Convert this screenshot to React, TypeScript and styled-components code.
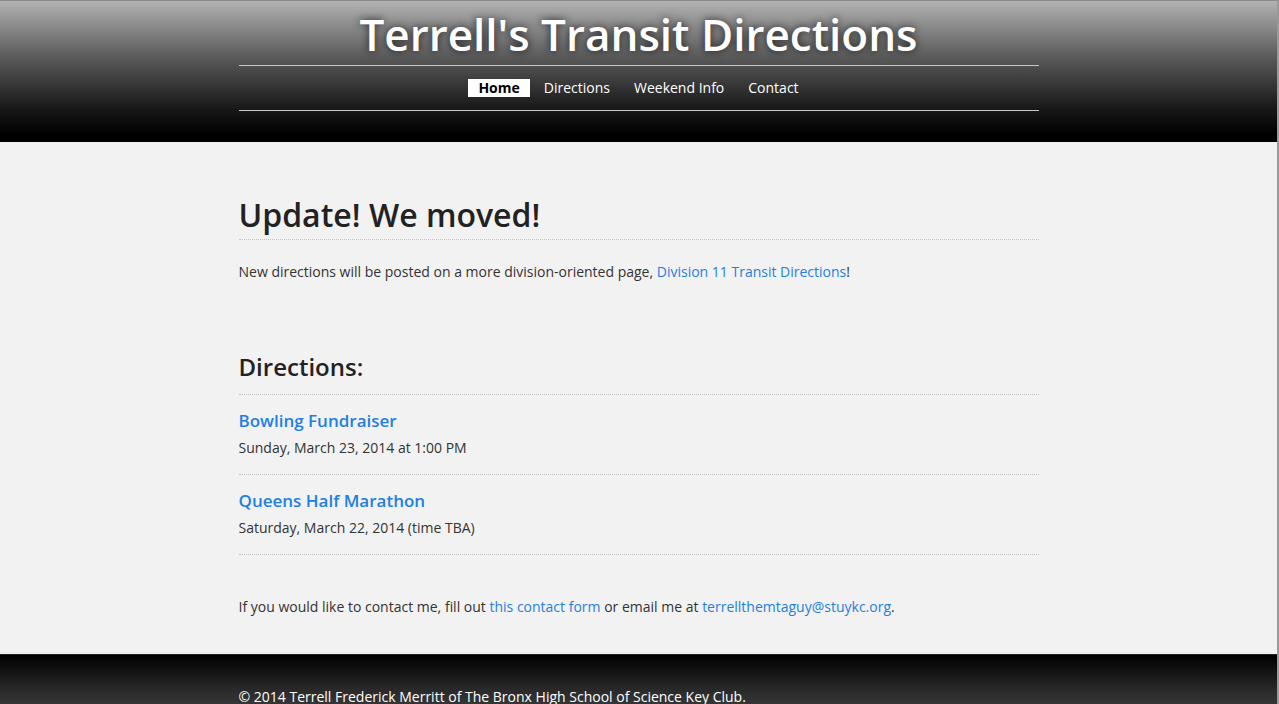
import styled, { createGlobalStyle } from "styled-components";

const GlobalStyle = createGlobalStyle`
  html, body {
    margin: 0;
    padding: 0;
    background: #f2f2f2;
    font-family: "Open Sans", "Liberation Sans", sans-serif;
    color: #333;
  }
`;

const Page = styled.div`
  min-height: 704px;
  background: #f2f2f2;
  border-right: 2px solid #9a9a9a;
`;

const Header = styled.header`
  height: 142px;
  background: linear-gradient(#b2b2b2 0%, #5a5a5a 40%, #1a1a1a 75%, #000 95%);
  border-top: 1px solid #8a8a8a;
  box-sizing: border-box;
`;

const Inner = styled.div`
  width: 800px;
  margin: 0 auto;
`;

const Title = styled.h1`
  margin: 0;
  height: 64px;
  line-height: 66px;
  text-align: center;
  color: #fff;
  font-size: 44px;
  font-weight: 600;
  text-shadow: 0 0 8px rgba(0, 0, 0, 0.8);
`;

const Nav = styled.nav`
  display: flex;
  justify-content: center;
  gap: 4px;
  padding: 13px 0;
  border-top: 1px solid #c8c8c8;
  border-bottom: 1px solid #c8c8c8;
`;

const NavItem = styled.a<{ $active?: boolean }>`
  display: block;
  height: 18px;
  line-height: 18px;
  padding: 0 10px;
  font-size: 14px;
  text-decoration: none;
  color: ${(p) => (p.$active ? "#000" : "#fff")};
  background: ${(p) => (p.$active ? "#fff" : "transparent")};
  font-weight: ${(p) => (p.$active ? 700 : 400)};
`;

const Main = styled.main`
  width: 800px;
  margin: 0 auto;
  padding: 53px 0 37px;
`;

const Heading = styled.h2<{ $size: number; $pad: number }>`
  margin: 0;
  font-size: ${(p) => p.$size}px;
  line-height: ${(p) => Math.round(p.$size * 1.25)}px;
  font-weight: 600;
  color: #222;
  padding-bottom: ${(p) => p.$pad}px;
  border-bottom: 1px dotted #c4c4c4;
`;

const Text = styled.p<{ $top: number }>`
  margin: ${(p) => p.$top}px 0 0;
  font-size: 14px;
  line-height: 20px;
  color: #333;
`;

const Link = styled.a`
  color: #1e80e0;
  text-decoration: none;
`;

const Section = styled.section`
  margin-top: 70px;
`;

const Item = styled.div`
  padding: 14px 0 16px;
  border-bottom: 1px dotted #c4c4c4;
`;

const ItemTitle = styled.a`
  display: block;
  font-size: 17px;
  line-height: 24px;
  font-weight: 600;
  color: #1e80e0;
  text-decoration: none;
`;

const ItemDate = styled.div`
  margin-top: 5px;
  font-size: 14px;
  line-height: 20px;
  color: #333;
`;

const Footer = styled.footer`
  height: 80px;
  padding-top: 32px;
  box-sizing: border-box;
  background: linear-gradient(#000 0%, #2a2a2a 45%, #4e4e4e 100%);
  border-top: 1px solid #222;
`;

const FooterText = styled.div`
  width: 800px;
  margin: 0 auto;
  color: #fff;
  font-size: 14px;
  line-height: 20px;
`;

const events = [
  { name: "Bowling Fundraiser", date: "Sunday, March 23, 2014 at 1:00 PM" },
  { name: "Queens Half Marathon", date: "Saturday, March 22, 2014 (time TBA)" },
];

export default function App() {
  return (
    <Page>
      <GlobalStyle />
      <Header>
        <Inner>
          <Title>Terrell's Transit Directions</Title>
          <Nav>
            <NavItem $active href="#">Home</NavItem>
            <NavItem href="#">Directions</NavItem>
            <NavItem href="#">Weekend Info</NavItem>
            <NavItem href="#">Contact</NavItem>
          </Nav>
        </Inner>
      </Header>
      <Main>
        <Heading $size={32} $pad={4}>Update! We moved!</Heading>
        <Text $top={22}>
          New directions will be posted on a more division-oriented page,{" "}
          <Link href="#">Division 11 Transit Directions</Link>!
        </Text>
        <Section>
          <Heading $size={24} $pad={12}>Directions:</Heading>
          {events.map((e) => (
            <Item key={e.name}>
              <ItemTitle href="#">{e.name}</ItemTitle>
              <ItemDate>{e.date}</ItemDate>
            </Item>
          ))}
        </Section>
        <Text $top={42}>
          If you would like to contact me, fill out{" "}
          <Link href="#">this contact form</Link> or email me at{" "}
          <Link href="#">terrellthemtaguy@stuykc.org</Link>.
        </Text>
      </Main>
      <Footer>
        <FooterText>© 2014 Terrell Frederick Merritt of The Bronx High School of Science Key Club.</FooterText>
      </Footer>
    </Page>
  );
}
